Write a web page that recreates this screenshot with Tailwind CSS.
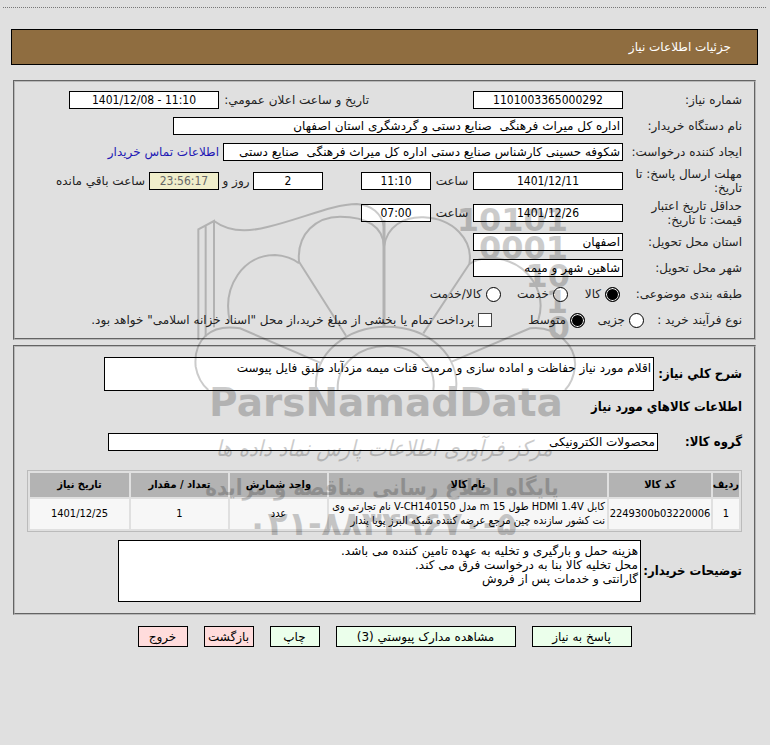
<!DOCTYPE html>
<html lang="fa" dir="rtl">

<head>
  <meta charset="UTF-8" />
  <meta name="viewport" content="width=device-width, initial-scale=1.0" />
  <title>جزئیات اطلاعات نیاز</title>
  <script src="https://cdn.jsdelivr.net/npm/@tailwindcss/browser@4"></script>
</head>

<body class="relative min-h-screen bg-[#e0e0e0] ps-1 pe-[3px] pt-[7px] font-['DejaVu_Sans',sans-serif] text-[12px] leading-[14px] text-[#222]">
  <div class="border-t border-dotted border-[#777]"></div>

  <header class="mx-2 mt-[21px] flex h-9 items-center border border-black bg-[#8f6d40] px-[26px] text-white">
    <h1>جزئیات اطلاعات نیاز</h1>
  </header>

  <form>
    <!-- Need details -->
    <section class="mx-[10px] mt-[15px] border-2 border-[#b8b8b8] px-3 py-[5px] [border-style:groove]">
      <div class="flex h-[26px] items-center">
        <label for="need-no" class="w-[119px]">شماره نیاز:</label>
        <input id="need-no" value="1101003365000292" class="h-[18px] w-[150px] border border-black bg-white text-center font-['DejaVu_Sans_Condensed'] text-black" />
        <label for="announce" class="ms-[104px] w-[150px] whitespace-nowrap">تاریخ و ساعت اعلان عمومي:</label>
        <input id="announce" dir="ltr" value="1401/12/08 - 11:10" class="h-[18px] w-[150px] border border-black bg-white text-center font-['DejaVu_Sans_Condensed'] text-black" />
      </div>
      <div class="flex h-[26px] items-center">
        <label for="buyer" class="w-[119px]">نام دستگاه خریدار:</label>
        <input id="buyer" value="اداره کل میراث فرهنگی  صنایع دستی و گردشگری استان اصفهان" class="h-[18px] w-[450px] border border-black bg-white px-0.5 text-black" />
      </div>
      <div class="flex h-[26px] items-center">
        <label for="creator" class="w-[119px] whitespace-nowrap">ایجاد کننده درخواست:</label>
        <input id="creator" value="شکوفه حسینی کارشناس صنایع دستی اداره کل میراث فرهنگی  صنایع دستی" class="h-[18px] w-[400px] border border-black bg-white px-0.5 text-black" />
        <a href="#" class="ms-1 whitespace-nowrap text-[#2218b4]">اطلاعات تماس خریدار</a>
      </div>
      <div class="flex h-8 items-center">
        <label for="deadline" class="w-[119px] pe-1">مهلت ارسال پاسخ: تا تاریخ:</label>
        <input id="deadline" value="1401/12/11" class="h-[18px] w-[150px] border border-black bg-white text-center font-['DejaVu_Sans_Condensed'] text-black" />
        <label for="deadline-time" class="w-[42px] text-center">ساعت</label>
        <input id="deadline-time" value="11:10" class="h-[18px] w-[70px] border border-black bg-white text-center font-['DejaVu_Sans_Condensed'] text-black" />
        <input id="days" value="2" class="ms-[38px] h-[18px] w-[70px] border border-black bg-white text-center font-['DejaVu_Sans_Condensed'] text-black" />
        <label for="days" class="w-[34px] text-center whitespace-nowrap">روز و</label>
        <input id="remaining" value="23:56:17" class="h-[18px] w-[70px] border border-black bg-[#f0eecb] text-center font-['DejaVu_Sans_Condensed'] text-[#666]" />
        <label for="remaining" class="ms-1 whitespace-nowrap">ساعت باقي مانده</label>
      </div>
      <div class="flex h-8 items-center">
        <label for="validity" class="w-[119px] pe-1">حداقل تاریخ اعتبار قیمت: تا تاریخ:</label>
        <input id="validity" value="1401/12/26" class="h-[18px] w-[150px] border border-black bg-white text-center font-['DejaVu_Sans_Condensed'] text-black" />
        <label for="validity-time" class="w-[42px] text-center">ساعت</label>
        <input id="validity-time" value="07:00" class="h-[18px] w-[70px] border border-black bg-white text-center font-['DejaVu_Sans_Condensed'] text-black" />
      </div>
      <div class="flex h-[26px] items-center">
        <label for="province" class="w-[119px]">استان محل تحویل:</label>
        <input id="province" value="اصفهان" class="h-[18px] w-[150px] border border-black bg-white px-0.5 text-black" />
      </div>
      <div class="flex h-[26px] items-center">
        <label for="city" class="w-[119px]">شهر محل تحویل:</label>
        <input id="city" value="شاهین شهر و میمه" class="h-[18px] w-[150px] border border-black bg-white px-0.5 text-black" />
      </div>
      <div class="flex h-[26px] items-center whitespace-nowrap">
        <span class="w-[122px]">طبقه بندی موضوعی:</span>
        <label class="flex w-[52px] items-center gap-1">
          <input type="radio" name="category" checked class="size-[15px] shrink-0 appearance-none rounded-full border border-black bg-white checked:bg-black checked:shadow-[inset_0_0_0_1px_white]" />کالا
        </label>
        <label class="flex w-[67px] items-center gap-1">
          <input type="radio" name="category" class="size-[15px] shrink-0 appearance-none rounded-full border border-black bg-white checked:bg-black" />خدمت
        </label>
        <label class="flex items-center gap-1">
          <input type="radio" name="category" class="size-[15px] shrink-0 appearance-none rounded-full border border-black bg-white checked:bg-black" />کالا/خدمت
        </label>
      </div>
      <div class="flex h-[26px] items-center whitespace-nowrap">
        <span class="w-[98px]">نوع فرآیند خرید :</span>
        <label class="flex w-[59px] items-center gap-1">
          <input type="radio" name="process" class="size-[15px] shrink-0 appearance-none rounded-full border border-black bg-white checked:bg-black" />جزیی
        </label>
        <label class="flex w-[93px] items-center gap-1">
          <input type="radio" name="process" checked class="size-[15px] shrink-0 appearance-none rounded-full border border-black bg-white checked:bg-black checked:shadow-[inset_0_0_0_1px_white]" />متوسط
        </label>
        <label class="flex items-center gap-1">
          <input type="checkbox" class="size-[14px] shrink-0 appearance-none border border-[#444] bg-white checked:bg-black" />پرداخت تمام یا بخشی از مبلغ خرید،از محل "اسناد خزانه اسلامی" خواهد بود.
        </label>
      </div>
    </section>

    <!-- Goods -->
    <section class="mx-[10px] mt-[5px] border-2 border-[#b8b8b8] px-3 pt-[10px] pb-[11px] [border-style:groove]">
      <div class="flex items-center">
        <label for="summary" class="w-[88px] font-['DejaVu_Sans_Condensed'] text-[13px] font-bold whitespace-nowrap text-black">شرح کلي نیاز:</label>
        <textarea id="summary" class="h-[34px] w-[550px] resize-none overflow-hidden border border-black bg-white px-0.5 py-[3px] text-black">اقلام مورد نیاز حفاظت و اماده سازی و مرمت قنات میمه مزدآباد طبق فایل پیوست</textarea>
      </div>
      <h2 class="mt-[9px] font-['DejaVu_Sans_Condensed'] text-[13px] leading-[14px] font-bold text-black">اطلاعات کالاهاي مورد نیاز</h2>
      <div class="mt-[19px] flex items-center">
        <label for="group" class="w-[84px] font-['DejaVu_Sans_Condensed'] text-[13px] font-bold text-black">گروه کالا:</label>
        <input id="group" value="محصولات الکترونیکی" class="h-[18px] w-[550px] border border-black bg-white px-0.5 text-black" />
      </div>

      <table class="mt-[19px] w-full table-fixed border-separate border-spacing-0.5 border border-[#bbb] text-center font-['DejaVu_Sans_Condensed','DejaVu_Sans',sans-serif] text-[11px] leading-[14px] text-black">
        <thead>
          <tr class="h-6 bg-[#b3b3b3]">
            <th class="w-[26px] whitespace-nowrap">ردیف</th>
            <th class="w-[102px]">کد کالا</th>
            <th>نام کالا</th>
            <th class="w-[97px] whitespace-nowrap">واحد شمارش</th>
            <th class="w-[97px] whitespace-nowrap">تعداد / مقدار</th>
            <th class="w-[99px]">تاریخ نیاز</th>
          </tr>
        </thead>
        <tbody>
          <tr class="h-[30px] bg-[#f7f7f7]">
            <td>1</td>
            <td>2249300b03220006</td>
            <td class="pe-0 ps-0.5 text-right">کابل HDMI 1.4V طول 15 m مدل V-CH140150 نام تجارتی وی نت کشور سازنده چین مرجع عرضه کننده شبکه البرز پویا پندار</td>
            <td>عدد</td>
            <td>1</td>
            <td>1401/12/25</td>
          </tr>
        </tbody>
      </table>

      <div class="mt-2 flex items-center">
        <label for="notes" class="w-[101px] font-['DejaVu_Sans_Condensed'] text-[13px] font-bold whitespace-nowrap text-black">توضیحات خریدار:</label>
        <textarea id="notes" class="h-[62px] w-[523px] resize-none overflow-hidden border border-black bg-white px-0.5 py-[3px] text-black">هزینه حمل و بارگیری و تخلیه به عهده تامین کننده می باشد.
محل تخلیه کالا بنا به درخواست فرق می کند.
گارانتی و خدمات پس از فروش</textarea>
      </div>
    </section>

    <div class="mt-[11px] flex justify-center gap-4 whitespace-nowrap text-black">
      <button type="button" class="h-[21px] w-[100px] border border-black bg-[#ebffeb]">پاسخ به نیاز</button>
      <button type="button" class="h-[21px] w-[180px] border border-black bg-[#ebffeb]">مشاهده مدارک پیوستي (3)</button>
      <button type="button" class="h-[21px] w-[50px] border border-black bg-[#ebffeb]">چاپ</button>
      <button type="button" class="h-[21px] w-[50px] border border-black bg-[#ffdcdc]">بازگشت</button>
      <button type="button" class="h-[21px] w-[50px] border border-black bg-[#ffdcdc]">خروج</button>
    </div>
  </form>

  <!-- Watermark over the whole form -->
  <svg aria-hidden="true" direction="ltr" viewBox="0 0 400 360" class="pointer-events-none absolute top-[190px] left-[190px] h-[360px] w-[400px] opacity-20">
    <svg viewBox="0 0 1200 1080" width="400" height="360" fill="none" stroke="black" stroke-width="6">
      <path d="M25 450V118L72 93V412M47 440V105" />
      <path d="M72 93C115 125 170 128 235 110C330 88 430 42 500 42C545 45 575 70 582 110" />
      <path d="M120 395C95 290 160 195 255 195Q300 198 327 220" />
      <path d="M468 437L327 215C320 130 380 80 450 80C530 80 580 110 582 170" />
      <path d="M582 90V408" stroke-width="9" />
      <path d="M582 170C590 110 640 80 700 82C790 85 850 150 838 222L700 430" />
      <path d="M838 222Q870 200 920 205C1020 220 1070 310 1045 390" />
      <path d="M378 600C370 490 470 410 590 410C720 410 810 500 798 600" />
      <path d="M443 600C440 520 510 468 590 468C680 468 740 530 730 600" />
      <path d="M395 520L150 415C60 400 10 450 17 530Q25 575 55 600" />
      <path d="M785 515L1020 415C1100 405 1160 470 1155 530Q1150 575 1125 600" />
    </svg>
    <g text-anchor="end" class="font-['DejaVu_Sans'] text-[32px] font-bold">
      <text x="378" y="41">10101</text>
      <text x="378" y="69">0001</text>
      <text x="380" y="97">10</text>
      <text x="378" y="123">1</text>
      <text x="380" y="149">0</text>
    </g>
    <g text-anchor="middle">
      <text x="196" y="226" class="font-['DejaVu_Sans'] text-[39px] font-bold">ParsNamadData</text>
      <text x="194" y="266" class="font-['DejaVu_Sans_Condensed','DejaVu_Sans'] text-[22px] italic">مرکز فرآوری اطلاعات پارس نماد داده ها</text>
      <text x="192" y="305" class="font-['DejaVu_Sans_Condensed','DejaVu_Sans'] text-[22px] font-bold">پایگاه اطلاع رسانی مناقصه و مزایده</text>
      <text x="192" y="345" class="font-['DejaVu_Sans'] text-[33px] font-bold">۰۲۱-۸۸۳۴۹۶۷۰-۵</text>
    </g>
  </svg>
</body>

</html>
